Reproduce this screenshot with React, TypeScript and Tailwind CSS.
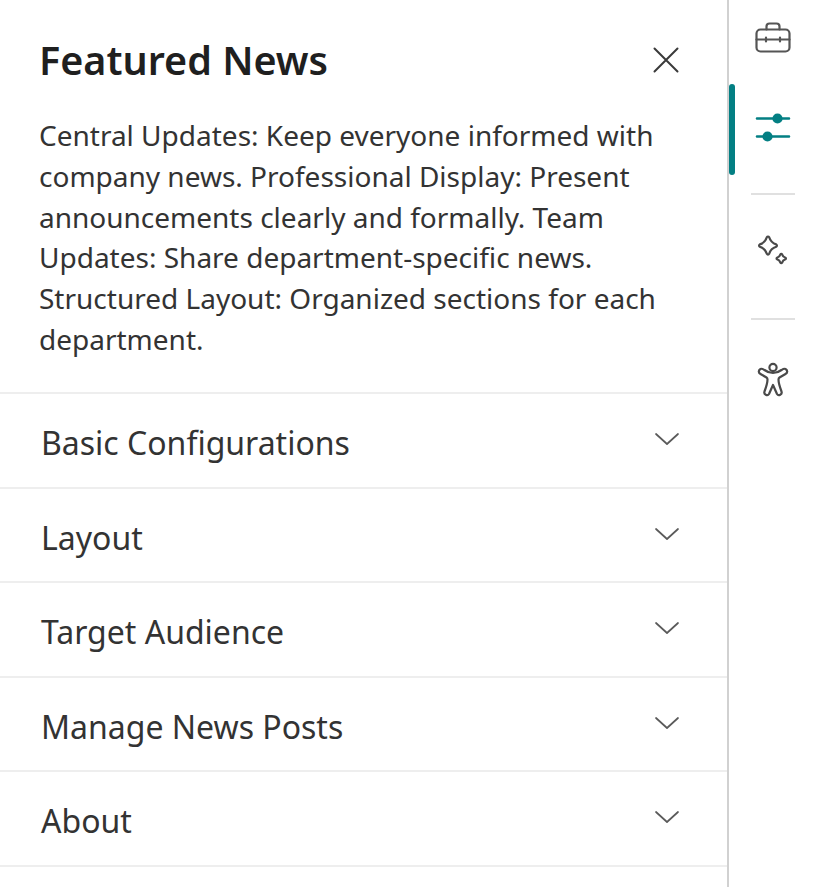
const sections = ["Basic Configurations", "Layout", "Target Audience", "Manage News Posts", "About"];

const description =
  "Central Updates: Keep everyone informed with company news. Professional Display: Present announcements clearly and formally. Team Updates: Share department-specific news. Structured Layout: Organized sections for each department.";

const Briefcase = () => (
  <svg width="36" height="32" viewBox="0 0 36 32" fill="none" stroke="#555555" strokeWidth="2.2" strokeLinejoin="round" strokeLinecap="round">
    <rect x="1.5" y="7.5" width="33" height="22" rx="4" />
    <path d="M11.5 7.5V4.5a3 3 0 0 1 3-3h7a3 3 0 0 1 3 3v3" />
    <path d="M1.5 17.5h33M11 15.5v4M25 15.5v4" />
  </svg>
);

const Sliders = () => (
  <svg width="36" height="32" viewBox="0 0 36 32" fill="#037f83" stroke="#037f83" strokeWidth="2.6" strokeLinecap="round">
    <path d="M2 7.5h32M2 25.500h32" />
    <circle cx="22.500" cy="7.500" r="3.800" />
    <circle cx="12.500" cy="25.500" r="3.800" />
  </svg>
);

const Sparkle = () => (
  <svg width="32" height="32" viewBox="0 0 32 32" fill="none" stroke="#4a4a4a" strokeWidth="2.200" strokeLinejoin="round">
    <path d="M9.800 2.300c.6-1 1.800-1 2.400 0 1.100 3.600 3.400 6 7 7.100 1 .6 1 1.800 0 2.400-3.600 1.100-5.900 3.400-7 7-.6 1-1.800 1-2.400 0-1.100-3.600-3.400-5.900-7-7-1-.6-1-1.800 0-2.400 3.600-1.100 5.900-3.500 7-7.100Z" />
    <path d="M23.500 19.200c.3-.6 1.200-.6 1.500 0 .6 1.900 1.600 3 3.500 3.600.6.3.6 1.200 0 1.500-1.900.6-2.900 1.600-3.500 3.500-.3.6-1.200.6-1.500 0-.6-1.900-1.600-2.900-3.500-3.500-.6-.3-.6-1.200 0-1.500 1.900-.6 2.900-1.700 3.500-3.600Z" />
  </svg>
);

const Accessibility = () => (
  <svg width="32" height="36" viewBox="0 0 32 36" fill="none" stroke="#4a4a4a" strokeWidth="2.200" strokeLinejoin="round" strokeLinecap="round">
    <circle cx="16" cy="5.500" r="3.600" />
    <path d="M3.500 7c-2.500 1.500-2 4 0 5l6 3.500c.8.500 1 1 1 2 0 4-1.500 8-3 12-1 3 3 5 4.500 2.500l4-9 4 9c1.500 2.500 5.500.5 4.500-2.500-1.500-4-3-8-3-12 0-1 .2-1.500 1-2l6-3.500c2-1 2.500-3.500 0-5-1.500-.8-2.500 0-4 1-2 1.500-5 3-8.500 3s-6.500-1.500-8.500-3c-1.500-1-2.500-1.800-4-1Z" />
  </svg>
);

const Chevron = () => (
  <svg width="26" height="14" viewBox="0 0 26 14" fill="none" stroke="#5a5a5a" strokeWidth="1.700" strokeLinecap="round" strokeLinejoin="round">
    <path d="M2 2l11 10L24 2" />
  </svg>
);

const Close = () => (
  <svg width="28" height="28" viewBox="0 0 28 28" fill="none" stroke="#3a3a3a" strokeWidth="2" strokeLinecap="round">
    <path d="M2.500 2.500l23 23M25.500 2.500l-23 23" />
  </svg>
);

export default function App() {
  return (
    <div className="flex h-[887px] w-[819px] overflow-hidden bg-white font-['Noto_Sans',sans-serif] text-[#242424]">
      <div className="w-[727px] shrink-0">
        <div className="h-[392px] pl-10 pr-[47px] pt-[34px]">
          <div className="flex items-center justify-between">
            <h1 className="-ml-px text-[39.500px] font-semibold leading-[52px] text-[#1f1f1f]">Featured News</h1>
            <Close />
          </div>
          <p className="mt-[29px] -ml-px w-[640px] text-[28px] leading-[40.800px] text-[#333333]">{description}</p>
        </div>
        {sections.map((name) => (
          <div key={name} className="flex h-[94.500px] items-center justify-between border-t-2 border-[#eeeeee] pl-[41px] pr-[47px]">
            <span className="mt-[6px] text-[32px] leading-10 text-[#333333]">{name}</span>
            <span className="-mt-[2px]"><Chevron /></span>
          </div>
        ))}
        <div className="border-t-2 border-[#eeeeee]" />
      </div>
      <div className="relative flex flex-1 flex-col items-center border-l-2 border-[#d1d1d1] pr-[2px]">
        <span className="absolute left-0 top-[84px] h-[91px] w-[6px] rounded-full bg-[#037f83]" />
        <div className="mt-[22px]"><Briefcase /></div>
        <div className="mt-[57px]"><Sliders /></div>
        <div className="mt-[50px] h-0.5 w-11 bg-[#e0e0e0]" />
        <div className="mt-[40px]"><Sparkle /></div>
        <div className="mt-[51px] h-0.5 w-11 bg-[#e0e0e0]" />
        <div className="mt-[42px]"><Accessibility /></div>
      </div>
    </div>
  );
}
